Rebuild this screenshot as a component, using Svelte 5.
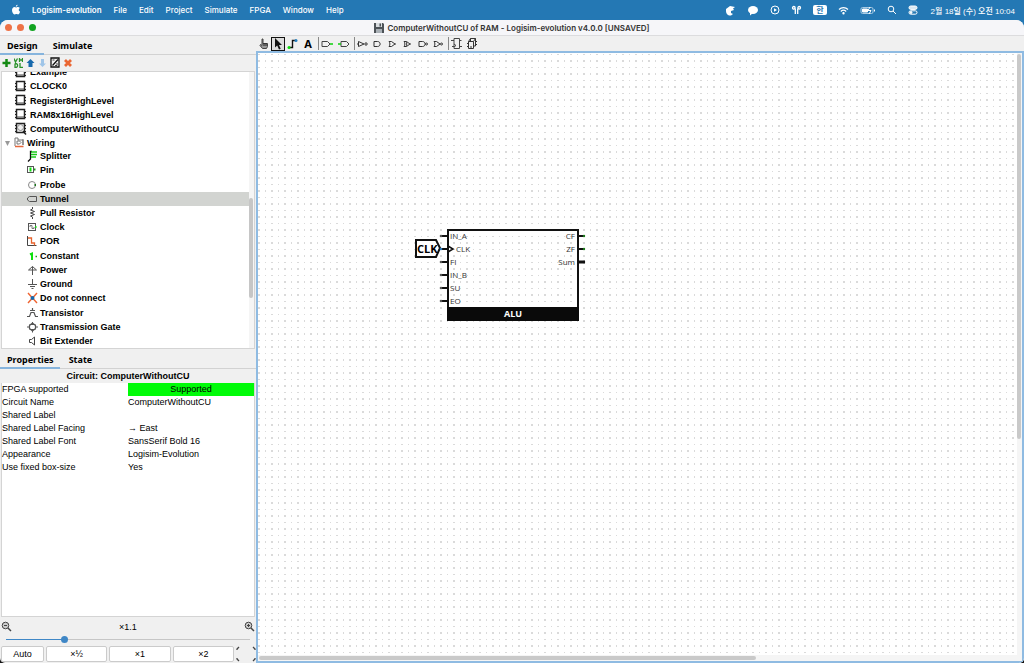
<script>
  const menus = ['File', 'Edit', 'Project', 'Simulate', 'FPGA', 'Window', 'Help'];
  const circuits = ['Example', 'CLOCK0', 'Register8HighLevel', 'RAM8x16HighLevel', 'ComputerWithoutCU'];
  const wiring = [
    'Splitter',
    'Pin',
    'Probe',
    'Tunnel',
    'Pull Resistor',
    'Clock',
    'POR',
    'Constant',
    'Power',
    'Ground',
    'Do not connect',
    'Transistor',
    'Transmission Gate',
    'Bit Extender'
  ];
  const gates = ['NOT', 'AND', 'OR', 'XOR', 'NAND', 'NOR'];
  const properties = [
    ['FPGA supported', 'Supported'],
    ['Circuit Name', 'ComputerWithoutCU'],
    ['Shared Label', ''],
    ['Shared Label Facing', '→ East'],
    ['Shared Label Font', 'SansSerif Bold 16'],
    ['Appearance', 'Logisim-Evolution'],
    ['Use fixed box-size', 'Yes']
  ];
  const inputs = ['IN_A', 'CLK', 'FI', 'IN_B', 'SU', 'EO'];
  const outputs = ['CF', 'ZF', 'Sum'];

  let selected = $state('Tunnel');
  let zoom = $state(23);
</script>

{#snippet wiringIcon(name)}
  <svg class="icon" width="12" height="12" viewBox="0 0 12 12" fill="none" stroke="#555">
    {#if name === 'Splitter'}
      <path d="M1 11.5 3.5 9V1.5H5" stroke="#111" stroke-width="1.3" />
      <path d="M4 2h6M4 4.5h6M4 7h5" stroke="#18c918" stroke-width="1.3" />
    {:else if name === 'Pin'}
      <rect x="0.5" y="2.5" width="6" height="6" />
      <path d="M3.5 3.5v4" stroke="#0ee00e" stroke-width="2" />
      <path d="M7 5.5h1.5" stroke="#18a018" stroke-width="2" />
    {:else if name === 'Probe'}
      <circle cx="5" cy="6" r="3.5" stroke="#888" />
      <path d="M7.500 6h1.500" stroke="#187018" stroke-width="2" />
    {:else if name === 'Tunnel'}
      <path d="M2.500 3.500h7v5h-7L.5 7V5z" />
    {:else if name === 'Pull Resistor'}
      <path d="M5.500 0v2l-2 1 4 1.500-4 1.500 4 1.500-4 1.500 2 1v2" stroke="#444" />
    {:else if name === 'Clock'}
      <rect x="1.500" y="2.500" width="7" height="7" />
      <path d="M3 6V4.500h2v3h2V6" stroke="#777" />
      <path d="M8 6h1.500" stroke="#18d018" stroke-width="2" />
    {:else if name === 'POR'}
      <path d="M.5 1v9.500h9" stroke="#444" />
      <path d="M1 3h3.500v5h3v2.500" stroke="#e8632c" stroke-width="1.300" />
    {:else if name === 'Constant'}
      <path d="M3 4.500 5 3.500v6.500" stroke="#0ee00e" stroke-width="2" />
      <path d="M8.500 6.500H10" stroke="#18a018" stroke-width="1.500" />
    {:else if name === 'Power'}
      <path d="M5.500 11V2.500L1.500 6h8L5.500 2.500" />
    {:else if name === 'Ground'}
      <path d="M5.500 1v5.500M1 6.500h9M3 8.500h5M4.500 10.500h2" />
    {:else if name === 'Do not connect'}
      <path d="m1 1 9 10M10 1 1 11" stroke="#ef6330" stroke-width="1.400" />
      <circle cx="5.500" cy="6" r="2" fill="#1669ae" stroke="none" />
    {:else if name === 'Transistor'}
      <path d="M0 9.500h2.500L4 5.500h3l1.500 4H11M3 3.500h5M5.500 1v2.500" stroke-width="1.200" />
    {:else if name === 'Transmission Gate'}
      <path d="M0 6h2.500M8.500 6H11M5.500 1v1M5.500 10v1.500M2.500 3.500h6M2.500 8.500h6" />
      <path d="M2.500 4.500 5.500 2l3 2.500v3L5.500 10l-3-2.500z" stroke-width="1.200" />
    {:else}
      <path d="M2.500 4.500h2l3-2.500v8L4.500 7.500h-2z" stroke="#444" />
    {/if}
  </svg>
{/snippet}

<div class="desktop">
  <header class="menubar">
    <svg width="10" height="12" viewBox="0 0 10 12" fill="#fff" aria-label="Apple">
      <path d="M6.700.8C6.500 2 5.700 2.700 4.800 2.700 4.800 1.700 5.600.9 6.700.8zM5 3.500c.5 0 1-.5 1.900-.5.8 0 1.500.4 1.900 1-1.600 1-1.300 3.100.3 3.700C8.600 9.200 7.800 10.400 7 10.400c-.7 0-1-.4-1.800-.4s-1.100.4-1.800.4C2.300 10.400 1 8.300 1 6.300 1 4.300 2.200 3 3.500 3c.7 0 1.100.5 1.500.5z" />
    </svg>
    <nav>
      <button class="app-name">Logisim-evolution</button>
      {#each menus as menu}
        <button>{menu}</button>
      {/each}
    </nav>
    <div class="status">
      <svg width="11" height="11" viewBox="0 0 11 11" fill="#fff"><path d="M1 4 5 1l5 1-2 1.500 1 1.500-3 1v2l2 1-2 1.500C3 11 1 8.500 1 6z" /></svg>
      <svg width="12" height="11" viewBox="0 0 12 11" fill="#fff"><ellipse cx="6" cy="5" rx="5" ry="4" /><path d="M3 8v2.500L6 8z" /></svg>
      <svg width="10" height="10" viewBox="0 0 10 10" fill="none" stroke="#fff"><circle cx="5" cy="5" r="4" /><path d="M4 3.200 7 5 4 6.800z" fill="#fff" stroke="none" /></svg>
      <svg width="11" height="10" viewBox="0 0 11 10" fill="none" stroke="#fff" stroke-width="1.300"><path d="M4.300 9V3.500M6.700 9V3.500" /><circle cx="2.800" cy="2.800" r="1.300" /><circle cx="8.200" cy="2.800" r="1.300" /></svg>
      <span class="input-source">한</span>
      <svg width="11" height="9" viewBox="0 0 11 9" fill="none" stroke="#fff" stroke-width="1.200"><path d="M1 3.500c2.500-2.600 6.500-2.600 9 0M2.800 5.500c1.600-1.500 3.800-1.500 5.400 0" /><circle cx="5.500" cy="7.300" r=".6" fill="#fff" /></svg>
      <svg width="16" height="9" viewBox="0 0 16 9" fill="none" stroke="#fff"><rect x="1" y="1.500" width="12" height="6" rx="1.500" stroke="#a9cbe4" /><path d="M2.500 3h5v3h-5z" fill="#fff" /><path d="m10 1-2 3.500h3L9 8M14.500 3.500v2" /></svg>
      <svg width="10" height="10" viewBox="0 0 10 10" fill="none" stroke="#fff"><circle cx="4" cy="4" r="2.800" /><path d="m6 6 3 3" /></svg>
      <svg width="10" height="10" viewBox="0 0 10 10" fill="none" stroke="#fff"><rect x="1" y="1" width="8" height="3.400" rx="1.700" fill="#d8e7f2" /><rect x="1" y="5.800" width="8" height="3.400" rx="1.700" /><circle cx="3" cy="7.500" r="1" fill="#fff" /></svg>
      <time>2월 18일 (수) 오전 10:04</time>
    </div>
  </header>

  <div class="window">
    <div class="titlebar">
      <div class="lights">
        <button class="light" aria-label="Close"></button>
        <button class="light" aria-label="Minimize"></button>
        <button class="light green" aria-label="Zoom window"></button>
      </div>
      <h1>
        <svg width="10" height="10" viewBox="0 0 10 10"><path d="M0 0h9l1 1v9H0z" fill="#4d5358" /><path d="M2 0h6v4H2z" fill="#d9dde0" /><path d="M5.500.5h1.500v3H5.500z" fill="#4d5358" /><path d="M2 6h6v4H2z" fill="#a9b0b6" /></svg>
        ComputerWithoutCU of RAM - Logisim-evolution v4.0.0 [UNSAVED]
      </h1>
    </div>

    <div class="workspace">
      <aside>
        <div class="tabs">
          <button class="active">Design</button>
          <button>Simulate</button>
        </div>
        <div class="actions">
          <button aria-label="Add circuit"><svg width="9" height="10" viewBox="0 0 9 10"><path d="M4.500 1v8M.5 5h8" stroke="#148a14" stroke-width="2.500" /></svg></button>
          <button aria-label="Add VHDL"><svg width="9" height="10" viewBox="0 0 9 10" fill="none" stroke="#2a912a" stroke-width="1.300"><path d="M0 .5 1.500 4 3.500.5M5.500 0v4M8.500 0v4M5.500 2h3M1 5.500v4c3.500.3 3.500-4.300 0-4M6 5v4.500h3" /></svg></button>
          <button aria-label="Move up"><svg width="9" height="10" viewBox="0 0 9 10" fill="#1769ac"><path d="M4.500 1 8.500 5h-2v4h-4V5h-2z" /></svg></button>
          <button aria-label="Move down"><svg width="9" height="10" viewBox="0 0 9 10" fill="#9fc5e8"><path d="M4.500 9 1 5.500h2V1h3v4.500h2z" /></svg></button>
          <button aria-label="Edit appearance"><svg width="10" height="11" viewBox="0 0 10 11" fill="none" stroke="#111" stroke-width="1.300"><path d="M1 1h8v9H1zM2.500 8.500 8 2.500" /><path d="M2.500 3h2M7 6v2.500H5" stroke-width=".8" /></svg></button>
          <button aria-label="Delete circuit"><svg width="10" height="10" viewBox="0 0 10 10"><path d="m2 2 6 6M8 2 2 8" stroke="#ea6633" stroke-width="2.800" /></svg></button>
        </div>

        <div class="tree">
          <div class="tree-content">
            <ul class="circuits">
              {#each circuits as circuit}
                <li>
                  <button>
                    <svg width="13" height="13" viewBox="0 0 13 13" fill="none" stroke="#222">
                      <rect x="2.500" y="1.500" width="8" height="9" fill="#fff" stroke-width="1.500" />
                      <path d="M1 3.500h1M1 6.500h1M1 9.500h1M11 3.500h1M11 6.500h1M11 9.500h1" />
                      {#if circuit === 'ComputerWithoutCU'}
                        <circle cx="6.500" cy="5.500" r="3" stroke="#888" fill="#eee" /><path d="m9 9 3 3.500" stroke-width="1.500" />
                      {:else}
                        <path d="M3 9h7" stroke="#444" />
                      {/if}
                    </svg>
                    {circuit}
                  </button>
                </li>
              {/each}
            </ul>
            <button class="folder">
              <svg width="8" height="8" viewBox="0 0 8 8"><path d="M2 2h5L4.500 7z" fill="#999" /></svg>
              <svg width="11" height="11" viewBox="0 0 11 11" fill="none" stroke="#777"><path d="M1 9V1h3v2h5v5M3 4h2.500l1.500 1.500L5.500 7H3zM9 2v6" /><path d="M1 9.500h8.500" stroke="#e5683c" stroke-width="1.500" /></svg>
              Wiring
            </button>
            <ul class="tools">
              {#each wiring as tool}
                <li>
                  <button class:selected={selected === tool} onclick={() => (selected = tool)}>
                    {@render wiringIcon(tool)}
                    {tool}
                  </button>
                </li>
              {/each}
            </ul>
          </div>
          <div class="tree-scroll"><span></span></div>
        </div>

        <div class="tabs lower">
          <button class="active">Properties</button>
          <button>State</button>
        </div>
        <h2>Circuit: ComputerWithoutCU</h2>
        <div class="properties">
          <table>
            <tbody>
              {#each properties as [name, value]}
                <tr>
                  <th scope="row">{name}</th>
                  <td class:supported={value === 'Supported'}>{value}</td>
                </tr>
              {/each}
            </tbody>
          </table>
        </div>

        <div class="zoom">
          <div class="zoom-row">
            <button aria-label="Zoom out"><svg width="11" height="11" viewBox="0 0 11 11" fill="#ccc" stroke="#444"><circle cx="4.500" cy="4.500" r="3.300" /><path d="m7 7 3 3" stroke-width="1.500" /><path d="M3 4.500h3" /></svg></button>
            <label for="zoom-range">×1.1</label>
            <button aria-label="Zoom in"><svg width="11" height="11" viewBox="0 0 11 11" fill="#ccc" stroke="#444"><circle cx="4.500" cy="4.500" r="3.300" /><path d="m7 7 3 3" stroke-width="1.500" /><path d="M3 4.500h3M4.500 3v3" /></svg></button>
          </div>
          <input id="zoom-range" type="range" min="0" max="100" bind:value={zoom} style="--fill: {zoom}%" />
          <div class="zoom-buttons">
            <button>Auto</button>
            <button>×½</button>
            <button>×1</button>
            <button>×2</button>
            <button class="fit" aria-label="Fit"><svg width="20" height="16" viewBox="0 0 20 16" fill="none" stroke="#444" stroke-width="1.300"><path d="M1 4V3l2-2M17 1l2 2v1M1 12v1l2 2M17 15l2-2v-1" /></svg></button>
          </div>
        </div>
      </aside>

      <main>
        <div class="toolbar">
          <button aria-label="Poke"><svg width="12" height="12" viewBox="0 0 12 12"><path d="M4 1h1v4.500h4.500v3l-1 2H4.500L2 7.500l.5-1L4 7.500z" fill="#999" stroke="#444" /><path d="M6 5v3M8 5v3" stroke="#222" /></svg></button>
          <button class="picked" aria-label="Edit"><svg width="12" height="12" viewBox="0 0 12 12"><path d="M3 0v9.500l2.200-2 1.800 4 1.700-.8L7 7h3z" fill="#111" /></svg></button>
          <button class="wide" aria-label="Wire"><svg width="12" height="12" viewBox="0 0 12 12"><path d="M2 9.500h3.500v-7H9" stroke="#111" stroke-width="1.400" fill="none" /><circle cx="2" cy="9.500" r="1.500" fill="#0cdc0c" /><circle cx="9" cy="2.500" r="1.500" fill="#247fc0" /></svg></button>
          <button class="text-tool" aria-label="Text">A</button>
          <span class="rule"></span>
          <button class="wide" aria-label="Input pin"><svg width="13" height="12" viewBox="0 0 13 12" fill="none" stroke="#444"><path d="M1 3.500h5.500L9 6 6.500 8.500H1z" /><path d="M9 6h3" stroke="#0cd00c" stroke-width="1.400" /></svg></button>
          <button class="wide" aria-label="Output pin"><svg width="13" height="12" viewBox="0 0 13 12" fill="none" stroke="#444"><path d="M4 3.500h5.500L12 6 9.500 8.500H4z" /><path d="M1 6h3" stroke="#0cd00c" stroke-width="1.400" /></svg></button>
          <span class="rule"></span>
          {#each gates as gate}
            <button class="gate" aria-label={gate}>
              <svg width="12" height="12" viewBox="0 0 12 12" fill="none" stroke="#333">
                {#if gate === 'NOT'}
                  <path d="M1.500 3.500v5L7 6zM0 6h1" /><circle cx="9" cy="6" r="1.200" />
                {:else if gate === 'AND' || gate === 'NAND'}
                  <path d="M2 3.500h3.500c3.500 0 3.500 5 0 5H2z" />
                {:else}
                  <path d="M2 3.500h2.500L8 6 4.500 8.500H2c1.200-1.500 1.200-3.500 0-5" />
                {/if}
                {#if gate === 'XOR'}<path d="M4 3.500c1 1.500 1 3.500 0 5" />{/if}
                {#if gate === 'NAND' || gate === 'NOR'}<circle cx="9.500" cy="6" r="1" />{/if}
                {#if gate === 'OR' || gate === 'XOR'}<path d="M8 6h1" />{/if}
              </svg>
            </button>
          {/each}
          <span class="rule"></span>
          <button class="chip" aria-label="Flip-flop"><svg width="12" height="13" viewBox="0 0 12 13" fill="none" stroke="#444"><path d="M3 1.500h5.500v10H3zM0 3.500h3M1 9.500h2M8.500 3.500h2M8.500 9.500H11M3 7l2 1.500L3 10" /></svg></button>
          <button class="chip" aria-label="Register"><svg width="12" height="13" viewBox="0 0 12 13" fill="none" stroke="#333"><path d="M2.500 4.500h5v7h-5zM4.500 4V1.500h5v7.500h-2M1 6.500h1.500M1 9.500h1.500M9.500 4.500h1.500M9.500 7.500h1.500M2.500 4.500l2-3M7.500 4.500l2-3M4 10h2" /></svg></button>
        </div>

        <div class="canvas">
          <svg class="sheet" aria-label="Circuit canvas">
            <defs>
              <pattern id="grid" x="7" y="1" width="13" height="13" patternUnits="userSpaceOnUse">
                <path d="M0 0h1v1H0zM6 0h2v1H6zM0 6h1v2H0zM6 6h2v2H6z" fill="#dadada" />
              </pattern>
            </defs>
            <rect width="100%" height="100%" fill="url(#grid)" />

            <g transform="translate(189 176)">
              <path d="M-31 11h20l4 8-4 9h-20z" fill="#fff" stroke="#111" stroke-width="2" />
              <text class="tunnel" x="-30" y="24">CLK</text>

              <rect x="1" y="1" width="130" height="90" fill="none" stroke="#111" stroke-width="2" />
              <rect y="78" width="132" height="14" fill="#0a0a0a" />
              <text class="chip-name" x="66" y="88" text-anchor="middle">ALU</text>

              {#each inputs as port, i}
                <path d="M-6 {7 + i * 13}h6" stroke="#111" stroke-width="2" />
                <circle cx="-6" cy={7 + i * 13} r="1.300" fill={port === 'CLK' ? '#2b78b8' : '#555'} />
                <text class="port" x={port === 'CLK' ? 9 : 3} y={10 + i * 13}>{port}</text>
              {/each}
              <path d="m1 17 5 3-5 3" fill="none" stroke="#111" stroke-width="1.500" />
              {#each outputs as port, i}
                <path d="M132 {7 + i * 13}h6" stroke="#111" stroke-width={port === 'Sum' ? 3 : 2} />
                <circle cx="137" cy={7 + i * 13} r="1.200" fill={port === 'Sum' ? '#111' : '#1c7a1c'} />
                <text class="port" x="128" y={10 + i * 13} text-anchor="end">{port}</text>
              {/each}
            </g>
          </svg>
          <div class="vscroll"><span></span></div>
          <div class="hscroll"><span></span></div>
        </div>
      </main>
    </div>
  </div>
</div>

<style>
  :global(body) {
    margin: 0;
  }

  .desktop {
    display: flex;
    flex-direction: column;
    height: 100vh;
    overflow: hidden;
    background: linear-gradient(#2478b4 50%, #151515 50%);
    font-family: 'Liberation Sans', Arial, sans-serif;
    font-size: 9px;
    color: #000;
  }

  button {
    padding: 0;
    border: 0;
    background: none;
    font: inherit;
    color: inherit;
  }

  svg {
    display: block;
    flex: none;
  }

  ul {
    list-style: none;
    margin: 0;
    padding: 0;
  }

  .menubar {
    display: flex;
    align-items: center;
    flex: 0 0 20px;
    padding: 0 9px 0 11px;
    gap: 11px;
    color: #fff;
    font-family: Inter, 'Noto Sans CJK KR', sans-serif;
    font-size: 8px;
    font-weight: 500;
  }

  .menubar nav {
    display: flex;
    flex: 1;
    gap: 12px;
  }

  .app-name {
    font-weight: 600;
  }

  .status {
    display: flex;
    align-items: center;
    gap: 11px;
  }

  .status time {
    margin-left: 2px;
    font-family: 'Liberation Sans', 'Noto Sans CJK KR', sans-serif;
  }

  .input-source {
    padding: 0 3px;
    border-radius: 2px;
    background: #fff;
    color: #2478b4;
    line-height: 10px;
    font-weight: 700;
  }

  .window {
    display: flex;
    flex-direction: column;
    flex: 1;
    min-height: 0;
    border-radius: 8px 8px 5px 5px;
    overflow: hidden;
    background: #f0f0f0;
  }

  .titlebar {
    display: grid;
    grid-template-columns: 1fr auto 1fr;
    align-items: center;
    flex: 0 0 15px;
    border-bottom: 1px solid #dcdcde;
    background: #f6f6f9;
  }

  .lights {
    display: flex;
    gap: 5px;
    padding-left: 5px;
  }

  .light {
    width: 7px;
    height: 7px;
    border-radius: 50%;
    background: #ee7247;
  }

  .green {
    background: #12a322;
  }

  h1 {
    display: flex;
    align-items: center;
    gap: 3px;
    margin: 0;
    font-family: Inter, sans-serif;
    font-size: 8px;
    font-weight: 600;
    color: #333;
  }

  .workspace {
    display: flex;
    flex: 1;
    min-height: 0;
  }

  aside {
    display: flex;
    flex-direction: column;
    flex: 0 0 256px;
  }

  .tabs {
    display: flex;
    flex: 0 0 18px;
    gap: 2px;
    border-bottom: 1px solid #d2d2d2;
    font-family: 'Noto Sans', sans-serif;
    font-weight: 700;
  }

  .tabs button {
    padding: 2px 6px 0 7px;
    margin-bottom: -1px;
    border-bottom: 2px solid transparent;
  }

  .tabs .active {
    border-color: #86b4dd;
  }

  .actions {
    display: flex;
    align-items: center;
    flex: 0 0 15px;
    gap: 3px;
    margin-bottom: 1px;
    padding-left: 2px;
  }

  .tree {
    display: flex;
    flex: 0 0 276px;
    margin: 0 1px;
    border: 1px solid #d4d4d4;
    overflow: hidden;
    background: #fff;
    font-weight: 700;
  }

  .tree-content {
    flex: 1;
    margin-top: -7px;
  }

  .tree ul {
    display: flex;
    flex-direction: column;
  }

  .circuits {
    height: 71px;
  }

  .tools {
    height: 199px;
  }

  .tree li {
    display: flex;
    flex: 1;
    min-height: 0;
  }

  .tree button {
    display: flex;
    align-items: center;
    width: 100%;
    gap: 1px;
  }

  .circuits button {
    padding-left: 12px;
    gap: 3px;
  }

  .tree .folder {
    height: 13px;
    padding-left: 1px;
    gap: 2px;
  }

  .folder svg:first-child {
    margin-right: 1px;
  }

  .tools button {
    padding-left: 25px;
  }

  .tools .selected {
    background: #d2d4d1;
  }

  .tree-scroll {
    width: 5px;
    background: #f5f5f5;
  }

  .tree-scroll span {
    display: block;
    width: 4px;
    height: 100px;
    margin-top: 126px;
    border-radius: 2px;
    background: #c6c6c6;
  }

  .lower {
    margin-top: 1px;
  }

  h2 {
    flex: none;
    margin: 0;
    line-height: 14px;
    text-align: center;
    font-size: 9px;
  }

  .properties {
    flex: 1;
    min-height: 0;
    margin: 0 1px;
    border: solid #d4d4d4;
    border-width: 0 1px 1px;
    background: #fff;
  }

  table {
    width: 100%;
    border-collapse: collapse;
    table-layout: fixed;
  }

  th,
  td {
    height: 13px;
    padding: 0;
    line-height: 13px;
    text-align: left;
    font-weight: 400;
  }

  .supported {
    background: #00fb08;
    text-align: center;
  }

  .zoom {
    flex: none;
    padding-bottom: 1px;
  }

  .zoom-row {
    display: flex;
    align-items: center;
    justify-content: space-between;
    height: 19px;
    padding: 0 1px;
  }

  input {
    display: block;
    appearance: none;
    width: 244px;
    height: 7px;
    margin: 0 6px 3px;
    background: linear-gradient(to right, #3f87c6 var(--fill), #c6c6c6 var(--fill)) center / 100% 1px no-repeat;
  }

  input::-webkit-slider-thumb {
    appearance: none;
    width: 7px;
    height: 7px;
    border-radius: 50%;
    background: #3f87c6;
  }

  .zoom-buttons {
    display: flex;
    gap: 2px;
    padding-left: 1px;
  }

  .zoom-buttons button {
    flex: 1;
    height: 16px;
    border: 1px solid #cbcbcb;
    border-radius: 2px;
    background: #fff;
  }

  .zoom-buttons button:first-child {
    flex: 0 0 43px;
  }

  .zoom-buttons .fit {
    flex: 0 0 20px;
    border: 0;
    background: none;
  }

  main {
    display: flex;
    flex-direction: column;
    flex: 1;
    min-width: 0;
  }

  .toolbar {
    display: flex;
    align-items: center;
    flex: 0 0 15px;
    padding-left: 1px;
  }

  .toolbar button {
    display: flex;
    align-items: center;
    justify-content: center;
    width: 14px;
    height: 14px;
  }

  .toolbar .picked {
    box-sizing: border-box;
    border: 1px solid #111;
    background: #ddd;
  }

  .toolbar .text-tool {
    font-family: 'Noto Sans', sans-serif;
    font-size: 11px;
    font-weight: 700;
  }

  .toolbar .wide {
    width: 16px;
  }

  .toolbar .gate,
  .toolbar .chip {
    width: 15px;
  }

  .rule {
    width: 1px;
    height: 13px;
    margin-left: 3px;
    background: #888;
  }

  .canvas {
    display: grid;
    grid-template-columns: 1fr 5px;
    grid-template-rows: 1fr 6px;
    flex: 1;
    min-height: 0;
    border: 2px solid #8fbbe2;
    background: #fff;
  }

  .sheet {
    width: 100%;
    height: 100%;
    min-height: 0;
  }

  .vscroll,
  .hscroll {
    background: #f5f5f5;
  }

  .hscroll {
    grid-column: 1 / 3;
  }

  .vscroll span,
  .hscroll span {
    display: block;
    border-radius: 2px;
    background: #c9c9c9;
  }

  .vscroll span {
    height: 64%;
    width: 4px;
    margin-top: 1px;
  }

  .hscroll span {
    height: 4px;
    width: 65%;
    margin: 1px 0 0 1px;
  }

  text {
    font-family: 'Open Sans', sans-serif;
  }

  .port {
    font-size: 8px;
    fill: #333;
  }

  .chip-name {
    font-size: 9px;
    font-weight: 700;
    fill: #fff;
  }

  .tunnel {
    font-size: 11px;
    font-weight: 700;
  }
</style>
